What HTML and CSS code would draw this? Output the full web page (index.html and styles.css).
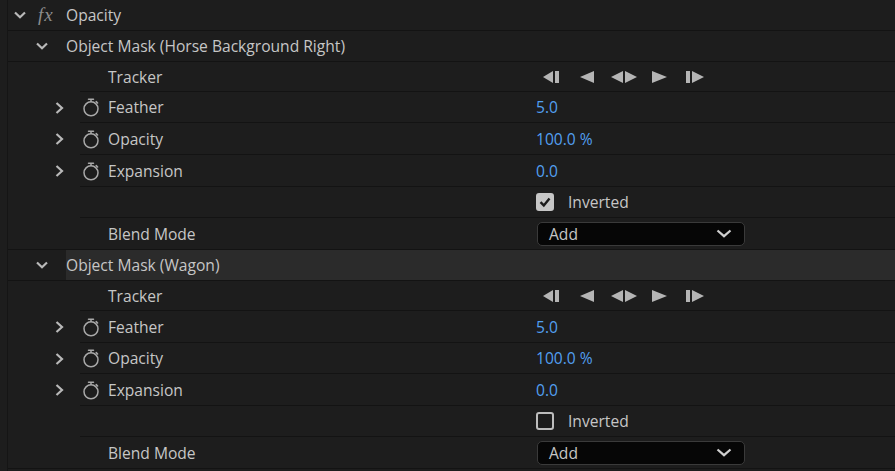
FILE: index.html
```html
<!DOCTYPE html>
<html>
<head>
<meta charset="utf-8">
<link rel="stylesheet" href="styles.css">
</head>
<body>
<div class="panel">
  <div class="row top h31">
    <span class="twist t-top"><svg class="chev-down" viewBox="0 0 12 8"><path d="M1 1.5 L6 6.2 L11 1.5"/></svg></span>
    <span class="fx">fx</span>
    <span class="title">Opacity</span>
  </div>

  <div class="row group h31">
    <span class="twist t-group"><svg class="chev-down" viewBox="0 0 12 8"><path d="M1 1.5 L6 6.2 L11 1.5"/></svg></span>
    <span class="title">Object Mask (Horse Background Right)</span>
  </div>

  <div class="row prop h30">
    <span class="ptwist"></span>
    <div class="pmain"><span class="watch"></span><span class="plabel">Tracker</span>
      <span class="pvalue">
        <svg class="tracker" viewBox="0 0 162 12">
          <path d="M10 0 L10 12 L0 6 Z"/><rect x="12" y="0" width="4" height="12"/>
          <path d="M51 0 L51 12 L37 6 Z"/>
          <path d="M80 0 L80 12 L68 6 Z"/><path d="M82 0 L82 12 L94 6 Z"/>
          <path d="M109 0 L109 12 L124 6 Z"/>
          <rect x="143" y="0" width="4" height="12"/><path d="M149 0 L149 12 L161 6 Z"/>
        </svg>
      </span>
    </div>
  </div>

  <div class="row prop h31">
    <span class="ptwist"><svg class="chev-right" viewBox="0 0 9 12"><path d="M1.5 1 L7 6 L1.5 11"/></svg></span>
    <div class="pmain"><span class="watch"><svg viewBox="0 0 20 20"><path d="M7.5 2.2 H12.5 M10 2.2 V4.5 M15.2 4.6 L16.6 6"/><circle cx="10" cy="11.8" r="7"/></svg></span><span class="plabel">Feather</span><span class="pvalue num">5.0</span></div>
  </div>

  <div class="row prop h32">
    <span class="ptwist"><svg class="chev-right" viewBox="0 0 9 12"><path d="M1.5 1 L7 6 L1.5 11"/></svg></span>
    <div class="pmain"><span class="watch"><svg viewBox="0 0 20 20"><path d="M7.5 2.2 H12.5 M10 2.2 V4.5 M15.2 4.6 L16.6 6"/><circle cx="10" cy="11.8" r="7"/></svg></span><span class="plabel">Opacity</span><span class="pvalue num">100.0 %</span></div>
  </div>

  <div class="row prop h32">
    <span class="ptwist"><svg class="chev-right" viewBox="0 0 9 12"><path d="M1.5 1 L7 6 L1.5 11"/></svg></span>
    <div class="pmain"><span class="watch"><svg viewBox="0 0 20 20"><path d="M7.5 2.2 H12.5 M10 2.2 V4.5 M15.2 4.6 L16.6 6"/><circle cx="10" cy="11.8" r="7"/></svg></span><span class="plabel">Expansion</span><span class="pvalue num">0.0</span></div>
  </div>

  <div class="row prop h31">
    <span class="ptwist"></span>
    <div class="pmain"><span class="watch"></span><span class="plabel"></span>
      <span class="pvalue check-wrap"><span class="checkbox checked"><svg viewBox="0 0 18 18"><path d="M4.5 9.2 L7.8 12.4 L13.5 5.6"/></svg></span><span class="check-label">Inverted</span></span>
    </div>
  </div>

  <div class="row prop h32 last">
    <span class="ptwist"></span>
    <div class="pmain"><span class="watch"></span><span class="plabel">Blend Mode</span>
      <span class="pvalue"><span class="select"><span>Add</span><svg class="chev-sel" viewBox="0 0 16 9"><path d="M1.5 1.5 L8 7.2 L14.5 1.5"/></svg></span></span>
    </div>
  </div>

  <div class="row group h31">
    <span class="twist t-group"><svg class="chev-down" viewBox="0 0 12 8"><path d="M1 1.5 L6 6.2 L11 1.5"/></svg></span>
    <span class="title hl">Object Mask (Wagon)</span>
  </div>

  <div class="row prop h30">
    <span class="ptwist"></span>
    <div class="pmain"><span class="watch"></span><span class="plabel">Tracker</span>
      <span class="pvalue">
        <svg class="tracker" viewBox="0 0 162 12">
          <path d="M10 0 L10 12 L0 6 Z"/><rect x="12" y="0" width="4" height="12"/>
          <path d="M51 0 L51 12 L37 6 Z"/>
          <path d="M80 0 L80 12 L68 6 Z"/><path d="M82 0 L82 12 L94 6 Z"/>
          <path d="M109 0 L109 12 L124 6 Z"/>
          <rect x="143" y="0" width="4" height="12"/><path d="M149 0 L149 12 L161 6 Z"/>
        </svg>
      </span>
    </div>
  </div>

  <div class="row prop h32">
    <span class="ptwist"><svg class="chev-right" viewBox="0 0 9 12"><path d="M1.5 1 L7 6 L1.5 11"/></svg></span>
    <div class="pmain"><span class="watch"><svg viewBox="0 0 20 20"><path d="M7.5 2.2 H12.5 M10 2.2 V4.5 M15.2 4.6 L16.6 6"/><circle cx="10" cy="11.8" r="7"/></svg></span><span class="plabel">Feather</span><span class="pvalue num">5.0</span></div>
  </div>

  <div class="row prop h31">
    <span class="ptwist"><svg class="chev-right" viewBox="0 0 9 12"><path d="M1.5 1 L7 6 L1.5 11"/></svg></span>
    <div class="pmain"><span class="watch"><svg viewBox="0 0 20 20"><path d="M7.5 2.2 H12.5 M10 2.2 V4.5 M15.2 4.6 L16.6 6"/><circle cx="10" cy="11.8" r="7"/></svg></span><span class="plabel">Opacity</span><span class="pvalue num">100.0 %</span></div>
  </div>

  <div class="row prop h32">
    <span class="ptwist"><svg class="chev-right" viewBox="0 0 9 12"><path d="M1.5 1 L7 6 L1.5 11"/></svg></span>
    <div class="pmain"><span class="watch"><svg viewBox="0 0 20 20"><path d="M7.5 2.2 H12.5 M10 2.2 V4.5 M15.2 4.6 L16.6 6"/><circle cx="10" cy="11.8" r="7"/></svg></span><span class="plabel">Expansion</span><span class="pvalue num">0.0</span></div>
  </div>

  <div class="row prop h31">
    <span class="ptwist"></span>
    <div class="pmain"><span class="watch"></span><span class="plabel"></span>
      <span class="pvalue check-wrap"><span class="checkbox"></span><span class="check-label">Inverted</span></span>
    </div>
  </div>

  <div class="row prop h32 last">
    <span class="ptwist"></span>
    <div class="pmain"><span class="watch"></span><span class="plabel">Blend Mode</span>
      <span class="pvalue"><span class="select"><span>Add</span><svg class="chev-sel" viewBox="0 0 16 9"><path d="M1.5 1.5 L8 7.2 L14.5 1.5"/></svg></span></span>
    </div>
  </div>
</div>
</body>
</html>
```

FILE: styles.css
```css
html, body {
  margin: 0;
  padding: 0;
  background: #1d1d1d;
  overflow: hidden;
}

body {
  font-family: "Open Sans", "Noto Sans", sans-serif;
  font-size: 15.6px;
  font-weight: 500;
  color: #c6c6c6;
}

.panel {
  margin-left: 7px;
  border-left: 1px solid #151515;
  min-height: 471px;
  box-sizing: border-box;
}

.row {
  display: flex;
  align-items: stretch;
  box-sizing: border-box;
}

.h30 { height: 31px; }
.h31 { height: 31px; }
.h32 { height: 32px; }
.row.h30 { height: 30px; }

.top, .group, .last {
  border-bottom: 1px solid #131313;
}

.twist {
  display: flex;
  align-items: center;
}

.t-top {
  width: 22px;
  padding-left: 6px;
}

.t-group {
  width: 30px;
  padding-left: 28px;
}

.chev-down {
  width: 12px;
  height: 8px;
  fill: none;
  stroke: #b9b9b9;
  stroke-width: 2.2;
}

.fx {
  display: flex;
  align-items: center;
  width: 28px;
  padding-left: 2px;
  font-family: "Liberation Serif", serif;
  font-style: italic;
  font-weight: 400;
  font-size: 19px;
  color: #8c8c8c;
  letter-spacing: 1px;
}

.title {
  display: flex;
  align-items: center;
  flex: 1;
  white-space: nowrap;
}

.title.hl {
  background: #2b2b2b;
}

.ptwist {
  width: 72px;
  flex: none;
  display: flex;
  align-items: center;
  padding-left: 47px;
  box-sizing: border-box;
}

.chev-right {
  width: 9px;
  height: 12px;
  fill: none;
  stroke: #b9b9b9;
  stroke-width: 2.2;
}

.pmain {
  flex: 1;
  display: flex;
  align-items: center;
  border-bottom: 1px solid #131313;
}

.last .pmain {
  border-bottom: none;
}

.watch {
  width: 28px;
  flex: none;
  display: flex;
  align-items: center;
  padding-left: 1px;
  box-sizing: border-box;
}

.watch svg {
  width: 20px;
  height: 20px;
  fill: none;
  stroke: #a9a9a9;
  stroke-width: 1.5;
  stroke-linecap: round;
}

.plabel {
  width: 428px;
  flex: none;
  white-space: nowrap;
}

.pvalue {
  display: flex;
  align-items: center;
}

.num {
  color: #529ff0;
}

.tracker {
  margin-left: 7px;
  width: 162px;
  height: 12px;
  fill: #b5b5b5;
}

.checkbox {
  width: 18px;
  height: 18px;
  box-sizing: border-box;
  border: 2px solid #bdbdbd;
  border-radius: 3px;
  display: flex;
  align-items: center;
  justify-content: center;
}

.checkbox.checked {
  background: #c6c6c6;
  border-color: #c6c6c6;
}

.checkbox svg {
  width: 18px;
  height: 18px;
  flex: none;
  fill: none;
  stroke: #1b1b1b;
  stroke-width: 2.4;
}

.check-label {
  margin-left: 14px;
}

.select {
  margin-left: 1px;
  width: 208px;
  height: 24px;
  box-sizing: border-box;
  background: #060606;
  border: 1px solid #3a3a3a;
  border-radius: 5px;
  display: flex;
  align-items: center;
  justify-content: space-between;
  padding: 0 12px 0 11px;
}

.chev-sel {
  width: 16px;
  height: 9px;
  fill: none;
  stroke: #cfcfcf;
  stroke-width: 2.2;
}
```
